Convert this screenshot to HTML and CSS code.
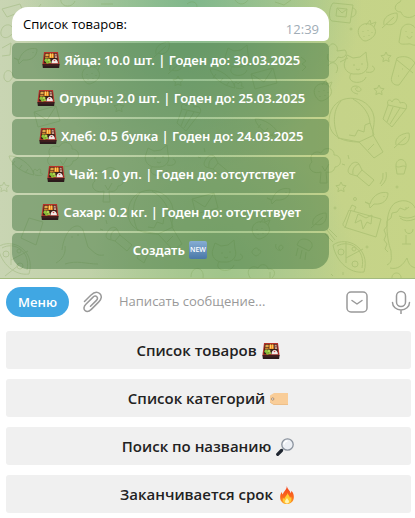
FILE: index.html
```html
<!DOCTYPE html>
<html lang="ru">
<head>
<meta charset="utf-8">
<meta name="viewport" content="width=device-width, initial-scale=1">
<title>Список товаров</title>
<link rel="stylesheet" href="styles.css">
</head>
<body>
<svg class="sprite" aria-hidden="true">
  <defs>
    <linearGradient id="blue" x1="0" y1="0" x2="0" y2="1"><stop offset="0" stop-color="#86add3"/><stop offset="1" stop-color="#4a78a8"/></linearGradient>
    <linearGradient id="flame" x1="0" y1="0" x2="0" y2="1"><stop offset="0" stop-color="#f4431f"/><stop offset=".6" stop-color="#fb6a1c"/><stop offset="1" stop-color="#fda32a"/></linearGradient>
  </defs>
  <symbol id="bento" viewBox="0 0 18 18">
    <path d="M2 1h14l1.600 12.500H.4z" fill="#b8322a"/>
    <path d="M.4 13h17.200l-.5 4H.9z" fill="#2b1a1b"/>
    <path d="M2.900 2.200h12.200l1.200 10H1.700z" fill="#3a2018"/>
    <path d="M3.500 2.800h3.200v2.200H3.300z" fill="#e3a94c"/><path d="M3.200 5.400h3.400v2H3z" fill="#cf8430"/>
    <path d="M7.200 2.600h4.600v4.400H7.200z" fill="#f08c22"/><path d="M8 2.600h1v4H8zM10.200 2.600h.8v4h-.8z" fill="#ffd26a"/>
    <path d="M12.600 2.800h2l.6 4.200h-2.400z" fill="#c9a08c"/><path d="M12.600 4.400h2.400v.8h-2.400z" fill="#7d4640"/>
    <circle cx="4.200" cy="9.300" r="1.700" fill="#8fc63b"/><circle cx="7" cy="9" r="1.500" fill="#b4d84f"/><circle cx="5.500" cy="11.200" r="1.500" fill="#86ba36"/><circle cx="8" cy="11.200" r="1.100" fill="#a6cf49"/>
    <path d="M9.500 12.200c0-2.200 1-4.200 3.100-4.200s3.200 2 3.400 4.200z" fill="#f2e9e5"/><circle cx="12.500" cy="9.500" r=".8" fill="#d3474b"/>
    <path d="M1.200 14h15.600" stroke="#6e2526" stroke-width=".6"/>
  </symbol>
  <symbol id="tag" viewBox="0 0 18 18">
    <path d="M4 3h14v12H4L0 12.500v-7z" fill="#f9cd98"/><path d="M0 12l4 2.400h14v.6H4L0 12.500z" fill="#e3b27a"/>
    <circle cx="2.700" cy="9" r="1.200" fill="#eee" stroke="#a07c5b" stroke-width=".8"/>
  </symbol>
  <symbol id="search" viewBox="0 0 18 18">
    <path d="M7.300 10.700l-2.600 2.600" stroke="#9aa3ad" stroke-width="1.600"/>
    <path d="M5.500 12.500L1.700 16.300" stroke="#1f2630" stroke-width="3.200" stroke-linecap="round"/>
    <circle cx="11.500" cy="6.500" r="5.700" fill="#eceff4" stroke="#8b939e" stroke-width="1.300"/>
    <path d="M8 6.500a3.500 3.500 0 013.500-3.500" stroke="#fff" stroke-width="1.400" fill="none"/>
  </symbol>
  <symbol id="fire" viewBox="0 0 18 18">
    <path d="M8.800 0c.4 3 3.200 4.300 3.900 7.200.5-.7.7-1.400.6-2.400 2 1.800 2.800 4.500 2.500 7.200-.4 3.500-3.200 6-6.800 6s-6.500-2.300-6.800-5.800C2 9.500 2.700 7.300 3.800 6c.1 1.100.4 1.900 1 2.500C5.300 5.500 9 3.800 8.800 0z" fill="url(#flame)"/>
    <path d="M9.500 6.700c.2 2 2.200 3.200 2.500 5.200.5-.4.800-.9 1-1.500 1.500 3.600-.5 7.200-4 7.200-3.300 0-5-2.800-4-5.800.4.700.8 1.100 1.400 1.400C6.500 10.500 9.500 9.600 9.500 6.700z" fill="#ffcb35"/>
    <path d="M9 11.800c.2 1.600 2 2.200 2 3.800 0 1.200-.8 2-2 2s-2-.9-2-2c0-1.500 1.600-2.200 2-3.800z" fill="#fff3b5"/>
  </symbol>
</svg>

<main class="app">
  <section class="chat">
    <svg class="wallpaper" viewBox="0 0 415 279" preserveAspectRatio="xMaxYMin slice" aria-hidden="true">
      <defs>
        <path id="star" d="M0-5l1.500 3.200 3.500.5-2.500 2.500.6 3.500L0 3l-3.100 1.700.6-3.500L-5-1.300l3.500-.5z"/>
        <g id="berry"><path d="M-8-4c-3 6 3 13 6 13s13-5 10-12-13-7-16-1zM-1-7l4-5 1 4 5-2-2 5"/><path d="M-4-1v1M1-2v1M5 0v1M-3 4v1M2 3v1"/></g>
        <g id="pizza"><path d="M-17-5c14-10 38 3 31 27-14 2-28-10-31-27zM-13-4c12-7 29 3 25 22M-4-8v21M-4 8l17-9"/><circle cx="-9" cy="2" r="3"/><circle cx="4" cy="-1" r="2"/><circle cx="5" cy="14" r="3"/></g>
        <g id="cat"><path d="M-15-10l6 3 7-1 6-5 1 9c3 8-3 14-11 13-8 1-14-6-11-13zM-9 0h2M-1-1h2M-6 4l2 1 2-1M-11 9c-6 9 12 12 15 3M4 7c8 2 11-4 6-6"/></g>
        <g id="envelope"><path d="M-13-6l22-6 4 15-22 6zM-13-6l13 8 9-14"/></g>
        <path id="balloon" d="M-22-8c2-30 41-27 45-3 1 7-2 14-1 18l10 17-9 6-15-16c-14 0-30-4-30-22zM-13 10L8 14l15-7-4-12-5 2-1 7-6-2-3 6-6-1M-10-27c-9 10-8 26-2 38M2-29c12 7 17 17 17 25M17 22l6-6"/>
        <path id="carrot" d="M-15-9c8-1 23 8 25 19-11-2-23-10-25-19zm6 5l-3 4M-2 0l-3 4M4 4L1 8M10 9c-2-5 2-6 3-3 3-4 5-1 3 2 4 0 4 4-5 2"/>
        <path id="popcorn" d="M-8-7l18 4L-4 15l-9-8zM-8-7c-2-6 3-6 4-3 2-5 8-3 8 1 5-2 8 2 6 6M-3-5l-6 15M4-4L-6 12"/>
        <path id="tree" d="M-4 18l1-11c-9 3-15-5-9-10-4-8 4-12 9-9 4-8 14-4 13 2 8 0 9 11 1 12-1 5-5 6-9 5l1 11zM-2 1l3 5 4-7"/>
        <path id="leaf" d="M-6 5C-8-3 1-7 7-7c2 8-4 14-11 11m-4 4L4-3"/>
        <path id="torch" d="M-12-9c2-4 7-5 9-2l3 6 12 10-5 6L-5 1l-7-2c-3-2-2-5 0-8zm9-2c-4 1-7 5-6 10M0-5l-5 6M-20-11l3 1M-14-20l1 4"/>
        <path id="fish" d="M-10 5c3-10 12-13 18-11 0 7-5 12-14 11l-4 4-1-4-4-2zM4-3v1"/>
      </defs>
      <g class="doodles">
        <path d="M333 3l20 2-3 18-18-2c-4-1-3-14 1-18zM337 8l10 1-1 8-10-1zM337 8l5 5 5-4M352 8c6 0 5 9-1 9M400 2c4-9 16-8 18 1 4 15-14 19-17 9-8 0-7-8-1-10z"/>
        <use href="#berry" x="367" y="32"/><use href="#leaf" x="390" y="20"/>
        <path d="M401 30c3-9 14-7 16 2v13c-5 1-6-2-9-1-3 0-8 1-9-2zM406 31v1M412 32v1M407 36c1 3 4 3 5 0"/>
        <path d="M329 47c3-7 10-1 8 4l8-1c4 5-2 9-7 7-4 9-13 5-10-3M328 66c5-8 13 0 8 7M340 62l8-4"/>
        <use href="#cat" x="362" y="65"/><use href="#star" x="386" y="57"/><use href="#star" x="379" y="90"/>
        <path d="M358 94c-8-1-9-8-2-8 7 1 6 7 1 5-3-2-1-4 1-3M392 76l5-18c7-3 14-1 18 5l-16 22c-6 1-9-4-7-9zM397 60l16 13M402 69h1M398 76h1"/>
        <use href="#balloon" x="351" y="128"/><use href="#popcorn" x="396" y="112"/>
        <use href="#torch" x="362" y="175"/><use href="#star" x="341" y="187"/><use href="#leaf" x="402" y="140"/>
        <path d="M396 167c-1-10 11-10 10 0l-2 7h-7zM396 166c3 3 7-2 10 1M386 172q2 8-5 14M383 173q1 6-3 11"/>
        <use href="#fish" x="380" y="199"/>
        <path d="M349 210l32 9-5 18-29-9c-4-1-5-4-3-6zM351 210l-6 18M358 214l-3 9 6-3 2 9 4-7 4 2 1-9-6 3zM350 209l2-4 4 2-2 4"/>
        <path d="M387 265c6-3 4-8 4-14-5-14-7-40 4-48 11-6 19 1 20 5M390 268c8 2 13-3 17-10 2 8 5 9 9 10M388 252l-3-3 2-5-3-4 2-5-2-5 3-4 0-5 4-3 1-5 5-1 3-4 5 2 4-3M406 207v2M399 216q8 4 16 0M400 218q6 5 15 1M405 229c0 6 8 6 8 0M406 235v9M402 244h9"/>
        <use href="#pizza" x="350" y="250"/><use href="#tree" x="324" y="165"/>
        <circle cx="351" cy="29" r="1"/><circle cx="355" cy="199" r="1.500"/><circle cx="367" cy="247" r="1"/><circle cx="397" cy="187" r="1"/><circle cx="335" cy="208" r="1"/>
        <path d="M327 230l8 10M325 234l8 8M329 229l8 8M392 279c-1-8 10-8 9 0M333 276l-2-2M343 275v-3"/>
        <path d="M2 9l18-5 3 7-16 6zM41 4c-6 7-4 13 2 16M61-2c-2 9 11 11 14 3M101 4h12M187 4c7-6 14 2 7 7M235 0c4 6 11 5 14-2M275 2l9 3 7-5M3 27c8-7 14 5 8 8-6 6-14 1-8-8zM2 48l9-5-1 12-8 1M4 78c-1-9 8-10 9-2-2 6-7 8-9 2z"/>
        <use href="#envelope" x="264" y="80"/><use href="#carrot" x="225" y="78"/><use href="#berry" x="323" y="92"/>
        <use href="#cat" x="243" y="58"/><use href="#tree" x="107" y="184"/><use href="#popcorn" x="190" y="116"/>
        <use href="#leaf" x="162" y="49"/><use href="#envelope" x="47" y="118"/><use href="#carrot" x="24" y="165"/>
        <use href="#star" x="4" y="187"/><use href="#pizza" x="15" y="252"/><use href="#fish" x="29" y="55"/>
        <use href="#berry" x="91" y="75"/><use href="#star" x="178" y="81"/><use href="#cat" x="163" y="158"/>
        <use href="#balloon" x="150" y="220"/><use href="#torch" x="120" y="240"/><use href="#fish" x="282" y="195"/>
        <use href="#berry" x="261" y="230"/><use href="#leaf" x="319" y="220"/><use href="#cat" x="230" y="253"/>
        <path d="M298 243c2-7 16-4 14 4l-3 4-12-6zM298 248l-2 8M302 250l-2 9M306 252l-1 8M253 250c3-4 6-1 5 0 4-1 4 4-2 6-4-2-5-4-3-6zM281 251c-6-4 2-9 2-3-3 5-9 1-7-4M62 250c3-23 16-29 21-20l5 17c8 7 9 9 16 8M56 263c7-4 10-10 9-17M65 264c12-4 21 0 33 0M72 236v2M78 234v2M301 57l5 4-4 3 4 3-4 4"/>
        <path d="M251 279c-7-9 1-15 7-11 3-6 10-3 10 1 7-1 9 5 3 10M270 272v7M191 277c0-12 14-11 12 1M5 276l14-11M137 258l5-9 6 5-4 9zM21 238l8-20 14 4-7 23z"/>
        <use href="#tree" x="62" y="159"/><use href="#envelope" x="205" y="205"/><use href="#carrot" x="270" y="128"/>
        <use href="#torch" x="218" y="168"/><use href="#star" x="119" y="107"/><use href="#leaf" x="176" y="66"/>
      </g>
    </svg>
    <article class="message">
      <div class="bubble">
        <p class="message-text">Список товаров:</p>
        <time class="message-time">12:39</time>
      </div>
      <div class="inline-keyboard">
        <button class="inline-button" type="button"><svg class="emoji" aria-hidden="true"><use href="#bento"/></svg> Яйца: 10.0 шт. | Годен до: 30.03.2025</button>
        <button class="inline-button" type="button"><svg class="emoji" aria-hidden="true"><use href="#bento"/></svg> Огурцы: 2.0 шт. | Годен до: 25.03.2025</button>
        <button class="inline-button" type="button"><svg class="emoji" aria-hidden="true"><use href="#bento"/></svg> Хлеб: 0.5 булка | Годен до: 24.03.2025</button>
        <button class="inline-button" type="button"><svg class="emoji" aria-hidden="true"><use href="#bento"/></svg> Чай: 1.0 уп. | Годен до: отсутствует</button>
        <button class="inline-button" type="button"><svg class="emoji" aria-hidden="true"><use href="#bento"/></svg> Сахар: 0.2 кг. | Годен до: отсутствует</button>
        <button class="inline-button" type="button">Создать <svg class="emoji" viewBox="0 0 18 18" aria-hidden="true"><rect width="18" height="18" rx="2" fill="url(#blue)"/><text x="9" y="11" class="new-label" text-anchor="middle">NEW</text></svg></button>
      </div>
    </article>
  </section>

  <form class="composer">
    <button class="menu-button" type="button">Меню</button>
    <button class="icon-button attach" type="button" aria-label="Прикрепить файл">
      <svg class="icon" viewBox="0 0 24 24"><path d="M3.500 11.500l6.300-6.300c3.500-3.500 6.500-3.800 8.900-1.700 2.400 2.300 2.100 5.400-.9 8.400l-7.500 7.500c-2.300 2.300-4.700 2.700-6.300 1.100s-1.300-4 .9-6.200l6.900-6.900c1.500-1.500 3-1.700 4-.7s.8 2.500-.6 3.900l-5.700 5.700"/></svg>
    </button>
    <input class="message-input" type="text" placeholder="Написать сообщение..." aria-label="Написать сообщение">
    <button class="icon-button keyboard-toggle" type="button" aria-label="Скрыть клавиатуру">
      <svg class="icon" viewBox="0 0 24 24"><rect x="2" y="2" width="20" height="20" rx="4"/><path d="M7 10.500l5 3.500 5-3.500"/></svg>
    </button>
    <button class="icon-button" type="button" aria-label="Голосовое сообщение">
      <svg class="icon" viewBox="0 0 24 24"><rect x="7.500" y="1.500" width="9" height="15" rx="4.500"/><path d="M3.500 12.500a8.500 7.500 0 0017 0M12 20v4"/></svg>
    </button>
  </form>

  <nav class="reply-keyboard">
    <button class="reply-button" type="button">Список товаров <svg class="emoji" aria-hidden="true"><use href="#bento"/></svg></button>
    <button class="reply-button" type="button">Список категорий <svg class="emoji" aria-hidden="true"><use href="#tag"/></svg></button>
    <button class="reply-button" type="button">Поиск по названию <svg class="emoji" aria-hidden="true"><use href="#search"/></svg></button>
    <button class="reply-button" type="button">Заканчивается срок <svg class="emoji" aria-hidden="true"><use href="#fire"/></svg></button>
  </nav>
</main>
</body>
</html>
```
FILE: styles.css
```css
* {
  box-sizing: border-box;
}

body {
  margin: 0;
  background: #fff;
  font: 13px/18px "Open Sans", "Noto Sans", sans-serif;
  color: #000;
}

button,
input {
  margin: 0;
  padding: 0;
  border: 0;
  background: none;
  font: inherit;
  color: inherit;
}

.sprite {
  position: absolute;
  width: 0;
  height: 0;
}

.new-label {
  font: 600 7px "Open Sans", sans-serif;
  fill: #fff;
}

.chat {
  position: relative;
  overflow: hidden;
  padding: 7px 86px 9px 12px;
  border-bottom: 1px solid #a3ba7d;
  background:
    radial-gradient(circle at 46% 0, #80b78b 0, rgba(128, 183, 139, 0) 48%),
    radial-gradient(ellipse at 54% 100%, #a1c58b 0, rgba(161, 197, 139, 0) 42%),
    linear-gradient(90deg, #c9d5b3 0, #b5cd9c 45%, #c5d389 82%, #c6d487 100%);
}

.wallpaper {
  position: absolute;
  inset: 0;
  width: 100%;
  height: 100%;
}

.doodles {
  fill: none;
  stroke: #6c943d;
  stroke-width: 1;
  stroke-linejoin: round;
  opacity: 0.23;
}

.message {
  position: relative;
  display: grid;
  gap: 2px;
}

.bubble {
  display: flex;
  justify-content: space-between;
  height: 34px;
  padding: 8px 10px 4px 11px;
  border-radius: 16px 16px 5px 5px;
  background: #fff;
}

.message-text {
  margin: 0;
}

.message-time {
  align-self: flex-end;
  color: #a0acb6;
  line-height: 16px;
}

.inline-keyboard {
  display: grid;
  gap: 2px;
}

.inline-button {
  height: 36px;
  padding-bottom: 2px;
  border-radius: 5px;
  background: rgba(58, 110, 58, 0.45);
  color: #fff;
  font-family: "Noto Sans", "Open Sans", sans-serif;
  font-weight: 600;
}

.inline-button:last-child {
  border-radius: 5px 5px 16px 16px;
}

.emoji {
  width: 18px;
  height: 18px;
  margin: 0 1px;
  vertical-align: -4px;
}

.composer {
  display: flex;
  align-items: center;
  height: 46px;
  padding: 0 2px 0 6px;
}

.menu-button {
  width: 63px;
  height: 30px;
  border-radius: 15px;
  background: #40a7e3;
  color: #fff;
  font-weight: 600;
}

.icon-button {
  width: 24px;
  height: 24px;
  flex: none;
}

.attach {
  margin-left: 12px;
}

.keyboard-toggle {
  margin-right: 20px;
}

.icon {
  display: block;
  width: 24px;
  height: 24px;
  fill: none;
  stroke: #999;
  stroke-width: 1.5px;
  stroke-linecap: round;
  stroke-linejoin: round;
}

.message-input {
  flex: 1;
  min-width: 0;
  margin-left: 14px;
  padding-bottom: 2px;
  outline: 0;
}

.message-input::placeholder {
  color: #999;
  opacity: 1;
}

.reply-keyboard {
  display: grid;
  gap: 10px;
  padding: 6px 4px 5px 6px;
}

.reply-button {
  height: 38px;
  border-radius: 3px;
  background: #f0f0f0;
  color: #222;
  font-size: 15px;
  font-weight: 600;
}
```
